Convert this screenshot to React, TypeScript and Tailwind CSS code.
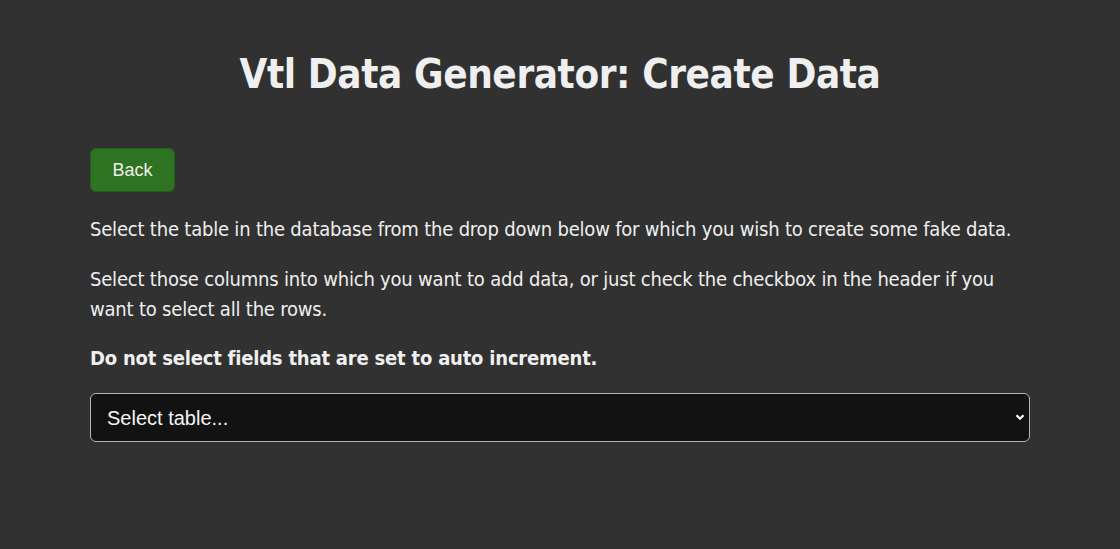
export default function App() {
  return (
    <div className="min-h-[549px] bg-[#313131] text-[#efefef] font-['Tahoma','DejaVu_Sans_Condensed',sans-serif]">
      <div className="mx-auto w-[940px] pt-[50px]">
        <h1 className="text-center text-[40px] leading-[48px] font-bold tracking-[-0.4px]">Vtl Data Generator: Create Data</h1>

        <button className="mt-[50px] h-[44px] w-[85px] rounded-md border border-[#24601a] bg-[#2e7321] font-['Liberation_Sans',sans-serif] text-[18px] text-[#eeeeee]">
          Back
        </button>

        <div className="tracking-[-0.2px] text-[20px] leading-[30px]">
          <p className="mt-[22px]">
            Select the table in the database from the drop down below for which you wish to create some fake data.
          </p>
          <p className="mt-[20px]">
            Select those columns into which you want to add data, or just check the checkbox in the header if you want to select all the rows.
          </p>
          <p className="mt-[19px] font-bold">Do not select fields that are set to auto increment.</p>
        </div>

        <div className="relative mt-[20px]">
          <select className="h-[49px] w-full appearance-none rounded-md border border-[#b5b5b5] bg-[#121212] pl-[16px] font-['Liberation_Sans',sans-serif] text-[20px] text-[#f5f5f5] outline-none">
            <option>Select table...</option>
          </select>
          <svg
            className="pointer-events-none absolute right-[5px] top-[19px]"
            width="10"
            height="10"
            viewBox="0 0 10 10"
            fill="none"
            stroke="#ffffff"
            strokeWidth="2.2"
          >
            <path d="M1.5 3.2 5 6.7 8.5 3.2" />
          </svg>
        </div>
      </div>
    </div>
  );
}
